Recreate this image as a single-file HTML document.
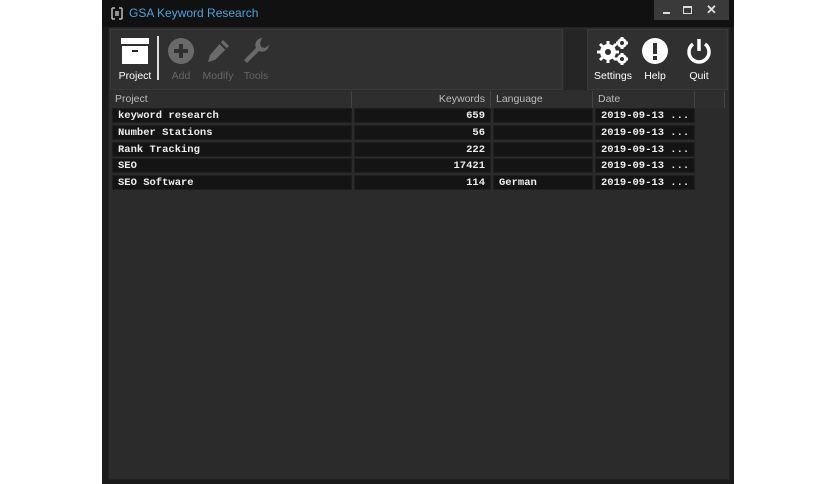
<!DOCTYPE html>
<html><head><meta charset="utf-8"><style>
*{margin:0;padding:0;box-sizing:border-box}
body{width:836px;height:484px;background:#fff;position:relative;overflow:hidden;font-family:"Liberation Sans",sans-serif}
.win{position:absolute;left:102px;top:0;width:632px;height:484px;background:#1a1a1a}
.title{position:absolute;left:0;top:0;width:632px;height:27px;background:#111}
.title span{position:absolute;left:27px;top:6px;color:#4ba3dc;font-size:12px}
.ctl{position:absolute;left:552px;top:0;width:75px;height:20px;background:#3a3a3a}
.inner{position:absolute;left:6px;top:27px;width:622px;height:453px;background:#2b2b2b;border:1px solid #222}
.panel{position:absolute;top:1px;height:61px;background:#303030;border:1px solid #3a3a3a}
.lbl{position:absolute;font-size:10.5px;color:#666;text-align:center;width:50px}
.hdr{position:absolute;top:63px;height:17px;background:#2e2e2e;border-right:1px solid #444;color:#bbb;font-size:10.5px;line-height:17px;padding:0 5px}
.cell{position:absolute;height:15px;background:#141414;border:1px solid #1e1e1e;color:#eee;font:bold 10.5px "Liberation Mono",monospace;line-height:14px;padding:0 5px;white-space:pre}
</style></head><body>
<div class="win">
 <div class="title">
  <svg style="position:absolute;left:8px;top:6px" width="14" height="15"><path d="M2 2v11M12 2v11M2 2h3M2 13h3M9 2h3M9 13h3M6 5v5M8 5v5" stroke="#bbb" stroke-width="1.5" fill="none"/></svg>
  <span>GSA Keyword Research</span>
  <div class="ctl">
   <div style="position:absolute;left:9px;top:12px;width:7px;height:2px;background:#ddd"></div>
   <div style="position:absolute;left:29px;top:6px;width:9px;height:8px;border:1.5px solid #ddd;border-top-width:2px"></div>
   <div style="position:absolute;left:52px;top:2px;color:#ddd;font-size:13px;font-weight:bold">✕</div>
  </div>
 </div>
 <div class="inner">
  <div class="panel" style="left:1px;width:453px"></div>
  <div style="position:absolute;left:455px;top:1px;width:23px;height:61px;background:#252525"></div>
  <div class="panel" style="left:478px;width:141px"></div>
  <svg style="position:absolute;left:12px;top:10px" width="28" height="26"><rect x="0" y="0" width="28" height="6" fill="#fff"/><rect x="1" y="8" width="26" height="18" fill="#fff"/><rect x="11" y="12" width="6" height="2" fill="#222"/></svg>
  <div class="lbl" style="left:1px;top:42px;color:#fff">Project</div>
  <div style="position:absolute;left:48px;top:8px;width:2px;height:44px;background:#ddd"></div>
  <svg style="position:absolute;left:59px;top:10px" width="26" height="26"><circle cx="13" cy="13" r="13" fill="#6a6a6a"/><path d="M13 6v14M6 13h14" stroke="#303030" stroke-width="4"/></svg>
  <div class="lbl" style="left:47px;top:42px">Add</div>
  <svg style="position:absolute;left:96px;top:10px" width="26" height="26"><path d="M18 2l6 6-14 14-7 2 2-7z" fill="#6a6a6a"/><path d="M15 5l6 6" stroke="#303030" stroke-width="2"/></svg>
  <div class="lbl" style="left:84px;top:42px">Modify</div>
  <svg style="position:absolute;left:133px;top:9px" width="28" height="28"><path d="M20 1a7 7 0 0 0-6 10L2 23l3 3 12-12a7 7 0 0 0 10-6l-4 3-4-1-1-4z" fill="#6a6a6a"/></svg>
  <div class="lbl" style="left:122px;top:42px">Tools</div>
  <svg style="position:absolute;left:487px;top:8px" width="34" height="30"><g fill="#fff"><circle cx="12" cy="16" r="8"/><circle cx="26" cy="7" r="5"/><circle cx="26" cy="23" r="5"/></g><g stroke="#fff" stroke-width="3"><path d="M12 5v22M1 16h22M4 8l16 16M4 24l16-16"/><path d="M26 1v12M20 7h12M26 17v12M20 23h12"/></g><circle cx="12" cy="16" r="3" fill="#303030"/><circle cx="26" cy="7" r="2" fill="#303030"/><circle cx="26" cy="23" r="2" fill="#303030"/></svg>
  <div class="lbl" style="left:479px;top:42px;color:#fff">Settings</div>
  <svg style="position:absolute;left:533px;top:10px" width="26" height="26"><circle cx="13" cy="13" r="13" fill="#fff"/><rect x="11" y="5" width="4" height="11" fill="#303030"/><rect x="11" y="18" width="4" height="4" fill="#303030"/></svg>
  <div class="lbl" style="left:521px;top:42px;color:#fff">Help</div>
  <svg style="position:absolute;left:576px;top:9px" width="28" height="28"><path d="M8 7a10 10 0 1 0 12 0" stroke="#fff" stroke-width="3.5" fill="none"/><path d="M14 2v12" stroke="#fff" stroke-width="3.5"/></svg>
  <div class="lbl" style="left:565px;top:42px;color:#fff">Quit</div>
  <div class="hdr" style="left:1px;width:242px">Project</div>
  <div class="hdr" style="left:243px;width:139px;text-align:right">Keywords</div>
  <div class="hdr" style="left:382px;width:102px">Language</div>
  <div class="hdr" style="left:484px;width:102px">Date</div>
  <div class="hdr" style="left:586px;width:30px"></div>
  <div class="cell" style="left:3px;top:80px;width:240px">keyword research</div>
  <div class="cell" style="left:245px;top:80px;width:137px;text-align:right">659</div>
  <div class="cell" style="left:384px;top:80px;width:100px"></div>
  <div class="cell" style="left:486px;top:80px;width:100px">2019-09-13 ...</div>
  <div class="cell" style="left:3px;top:97px;width:240px">Number Stations</div>
  <div class="cell" style="left:245px;top:97px;width:137px;text-align:right">56</div>
  <div class="cell" style="left:384px;top:97px;width:100px"></div>
  <div class="cell" style="left:486px;top:97px;width:100px">2019-09-13 ...</div>
  <div class="cell" style="left:3px;top:114px;width:240px">Rank Tracking</div>
  <div class="cell" style="left:245px;top:114px;width:137px;text-align:right">222</div>
  <div class="cell" style="left:384px;top:114px;width:100px"></div>
  <div class="cell" style="left:486px;top:114px;width:100px">2019-09-13 ...</div>
  <div class="cell" style="left:3px;top:130px;width:240px">SEO</div>
  <div class="cell" style="left:245px;top:130px;width:137px;text-align:right">17421</div>
  <div class="cell" style="left:384px;top:130px;width:100px"></div>
  <div class="cell" style="left:486px;top:130px;width:100px">2019-09-13 ...</div>
  <div class="cell" style="left:3px;top:147px;width:240px">SEO Software</div>
  <div class="cell" style="left:245px;top:147px;width:137px;text-align:right">114</div>
  <div class="cell" style="left:384px;top:147px;width:100px">German</div>
  <div class="cell" style="left:486px;top:147px;width:100px">2019-09-13 ...</div>
 </div>
</div>
</body></html>
